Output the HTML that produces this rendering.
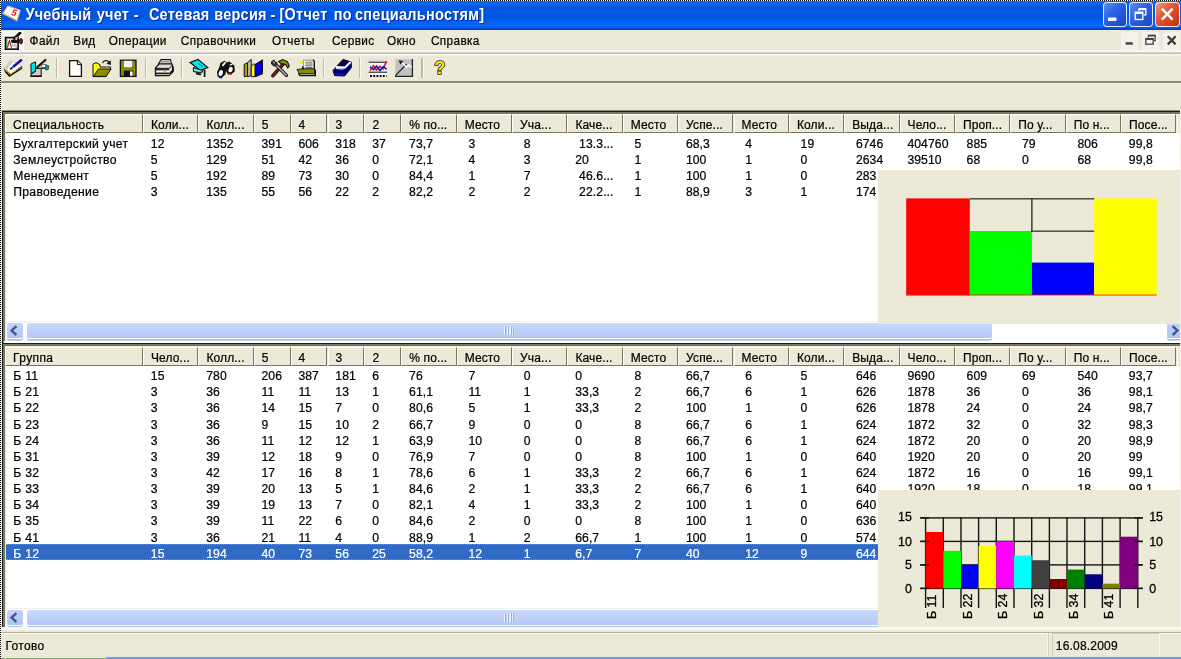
<!DOCTYPE html>
<html lang="ru">
<head>
<meta charset="utf-8">
<title>Учебный учет</title>
<style>
html,body{margin:0;padding:0;}
body{width:1181px;height:659px;overflow:hidden;background:#ECE9D8;font-family:"Liberation Sans",sans-serif;font-size:12px;color:#000;position:relative;}
#app{position:absolute;left:0;top:0;width:1181px;height:659px;overflow:hidden;will-change:transform;}
.abs{position:absolute;}
/* dotted frame */
#dotT{position:absolute;left:0;top:0;width:1181px;height:1px;background:repeating-linear-gradient(to right,#000 0,#000 1px,#fff 1px,#fff 2px);}
#dotL{position:absolute;left:0;top:0;width:1px;height:659px;background:repeating-linear-gradient(to bottom,#000 0,#000 1px,#fff 1px,#fff 2px);}
/* title bar */
#title{position:absolute;left:1px;top:1px;width:1180px;height:28.7px;background:linear-gradient(to bottom,#0E6EF6 0%,#0A68F2 6%,#0660EC 13%,#0257E4 21%,#0055E1 52%,#0059E8 62%,#0462F4 73%,#0566F8 89%,#0552E2 93%,#0540CC 97%,#0436BC 100%);}
#title .txt{position:absolute;left:0;top:0;height:29px;line-height:29px;color:#fff;font-weight:bold;font-size:14.5px;white-space:pre;text-shadow:1px 1px 0.5px #0A2F9C;letter-spacing:0.26px;}
#title .txt span{position:absolute;top:0;transform-origin:0 19.8px;transform:scaleY(1.08);}
.cb{position:absolute;top:1.4px;width:24.2px;height:24.2px;border-radius:4px;border:1.2px solid rgba(255,255,255,0.85);box-sizing:border-box;background:linear-gradient(135deg,#5C8EF4 0%,#2F64E4 40%,#2253D6 70%,#1A45C2 100%);}
.cb.x{background:linear-gradient(135deg,#F09A80 0%,#E2583A 40%,#D2441F 70%,#B83410 100%);}
.cb svg{position:absolute;left:-1.2px;top:-1.2px;}
/* menu */
#menu{position:absolute;left:1px;top:30px;width:1180px;height:23px;background:#ECE9D8;}
#menu span.mi{position:absolute;top:0;height:23px;line-height:22px;transform-origin:0 14.9px;transform:scaleY(1.1);font-size:11.8px;letter-spacing:0.35px;white-space:nowrap;}
.mb{position:absolute;top:2.3px;width:17px;height:17.4px;background:#F4F2EA;border-radius:1px;}
.mb svg{position:absolute;left:0;top:0;}
#tb{position:absolute;left:1px;top:50.2px;width:1180px;height:31px;background:linear-gradient(to bottom,#F6F5EE 0,#F6F5EE 2.4px,#BFBCAC 2.6px,#BFBCAC 3.8px,#F9F8F3 4px,#F9F8F3 5.4px,#ECE9D8 5.6px);}
.sep{position:absolute;top:59px;width:1px;height:19px;background:#ACA899;box-shadow:1px 0 0 #fff;}
.ico{position:absolute;top:58px;width:20px;height:20px;}
/* list */
.hdr{position:absolute;left:5px;width:1176px;background:#ECE9D8;}
.hc{position:absolute;box-sizing:border-box;white-space:nowrap;overflow:hidden;background:#ECE9D8;border-top:1px solid #fff;border-left:1.2px solid #fff;border-right:1.4px solid #77745F;border-bottom:1.4px solid #77745F;}
.hc span{position:absolute;left:7px;top:-0.4px;line-height:22px;letter-spacing:0.12px;transform-origin:0 14.6px;transform:scaleY(1.07);}
.list{position:absolute;left:5.5px;width:1176px;background:#fff;overflow:hidden;}
.row{position:absolute;left:0;width:1181px;white-space:nowrap;font-size:12.2px;transform-origin:0 12.1px;transform:scaleY(1.07);}
.row span{position:absolute;top:0;letter-spacing:0.08px;}
.row span:first-child{letter-spacing:0.3px;}
.row,.hc span,#menu .mi,#status span{-webkit-text-stroke:0.22px currentColor;}
.row.sel{color:#fff;}
.selbg{position:absolute;left:6px;width:1174px;background:#316AC5;box-sizing:border-box;border-top:1px dotted rgba(206,149,58,0.75);border-bottom:1px dotted rgba(206,149,58,0.75);}
.panel{position:absolute;background:#ECE9D8;}
/* scrollbars */
.sb{position:absolute;left:5.5px;width:1174px;height:20.4px;background:linear-gradient(to bottom,#F0EEE4 0px,#FBFAF5 2px,#FEFEFC 5px,#FFFFFF 100%);}
.sbtn{position:absolute;top:2.2px;width:15.8px;height:14.8px;box-sizing:border-box;border-radius:2.5px;background:linear-gradient(to bottom,#C3D3FB 0%,#B9CBF8 55%,#B0C4F4 100%);box-shadow:0 0 0 1px #fff,0 2.5px 0 0.3px #A8C2EE;}
.grip{position:absolute;width:10.6px;height:8.4px;background:repeating-linear-gradient(to right,#F0F5FF 0,#F0F5FF 1.2px,#8FA9EC 1.3px,#8FA9EC 2.3px,#C1D2FB 2.4px,#C1D2FB 2.65px);opacity:0.9}
.sbtn svg{position:absolute;left:0;top:0;}
.thumb{position:absolute;top:2.2px;height:14.8px;box-sizing:border-box;border-radius:2.5px;background:linear-gradient(to bottom,#C9D8FC 0%,#C1D2FB 40%,#B5C8F6 100%);box-shadow:0 0 0 1px #fff,0 2.5px 0 0.3px #A8C2EE;}
#status{position:absolute;left:1px;top:630px;width:1180px;height:28px;background:#ECE9D8;}
</style>
</head>
<body>
<div id="app">

<!-- title bar -->
<div id="title">
  <svg class="abs" style="left:1.2px;top:4.4px" width="20" height="18" viewBox="0 0 20 18">
    <path d="M6 0.9 L18.2 5.4 L15 15.4 L0.9 8.2 Z" fill="#fff" stroke="#DDBB92" stroke-width="1.1"/>
    <path d="M1.2 9 L14.8 16 L16 12.6" fill="none" stroke="#CFA46E" stroke-width="1.2" stroke-dasharray="1.5 1"/>
    <text x="9.6" y="10.2" font-family="'Liberation Sans',sans-serif" font-size="9" font-weight="bold" font-style="italic" fill="#E81010" transform="rotate(14 10 8)">5</text>
  </svg>
  <div class="txt"><span style="left:24.4px">Учебный</span> <span style="left:95.7px">учет</span> <span style="left:132.7px">-</span> <span style="left:147.9px">Сетевая</span> <span style="left:213.2px">версия</span> <span style="left:269.4px">-</span> <span style="left:278.4px">[Отчет</span> <span style="left:332.8px">по</span> <span style="left:354.0px">специальностям]</span> </div>
  <div class="cb" style="left:1101.5px"><svg width="23.4" height="23.6" viewBox="-0.4 -0.3 23.4 23.6"><rect x="5.6" y="15.2" width="8.4" height="3.4" fill="#fff"/></svg></div>
  <div class="cb" style="left:1128.1px"><svg width="23.4" height="23.6" viewBox="-0.4 -0.3 23.4 23.6"><path d="M9.6 8.6 L9.6 6.4 L16.4 6.4 L16.4 12.6 L14.4 12.6" fill="none" stroke="#fff" stroke-width="1.3"/><path d="M9.4 6.9 L16.6 6.9" stroke="#fff" stroke-width="1.9"/><rect x="5.8" y="10" width="7.6" height="7.2" fill="none" stroke="#fff" stroke-width="1.4"/><path d="M5.6 10.6 L13.6 10.6" stroke="#fff" stroke-width="2.2"/></svg></div>
  <div class="cb x" style="left:1154.4px"><svg width="23.4" height="23.6" viewBox="-0.4 -0.3 23.4 23.6"><path d="M6.4 6.4 L17.2 17.4 M17.2 6.4 L6.4 17.4" stroke="#fff" stroke-width="2.5" stroke-linecap="butt"/></svg></div>
</div>

<!-- menu bar -->
<div id="menu">
  <div class="abs" style="left:2.4px;top:1.4px;width:20.4px;height:19.6px;background:#FBFAF6"></div>
  <svg class="abs" style="left:3px;top:1.6px" width="20" height="19" viewBox="0 0 20 19">
    <rect x="1.5" y="5.6" width="12.6" height="11.6" fill="#fff" stroke="#111" stroke-width="1.7"/>
    <path d="M3.4 15.6 L5.4 8.6 L7.6 15.6" fill="none" stroke="#B01010" stroke-width="1.1"/>
    <path d="M2.8 7 L2.8 16" stroke="#109030" stroke-width="1.1"/>
    <path d="M7.4 12.4 L13 15.4 M9.6 11.6 L13.2 13.4" stroke="#bbb" stroke-width="1.2"/>
    <path d="M10.4 6.6 L16 1" stroke="#111" stroke-width="2.8" stroke-linecap="round"/>
    <path d="M6.8 7.8 L15.6 7.8 L15.6 11 L7.6 11 Z" fill="#111"/>
    <ellipse cx="17" cy="9.2" rx="1.5" ry="2.8" fill="#9C1010" stroke="#111" stroke-width="0.9"/>
    <path d="M11.4 6.4 L13.6 5.4" stroke="#fff" stroke-width="1.2"/>
  </svg>
  <span class="mi" style="left:28.6px">Файл</span>
  <span class="mi" style="left:72.2px">Вид</span>
  <span class="mi" style="left:107.8px">Операции</span>
  <span class="mi" style="left:179.8px">Справочники</span>
  <span class="mi" style="left:271px">Отчеты</span>
  <span class="mi" style="left:331px">Сервис</span>
  <span class="mi" style="left:386px">Окно</span>
  <span class="mi" style="left:430px">Справка</span>
  <div class="mb" style="left:1120px"><svg width="17" height="17.4" viewBox="0 0 17 17.4"><rect x="4.6" y="10.2" width="7.2" height="2.5" fill="#444"/></svg></div>
  <div class="mb" style="left:1140.8px"><svg width="17" height="17.4" viewBox="0 0 17 17.4"><path d="M6.4 5.4 L6.4 3.4 L13.2 3.4 L13.2 8.6 L11.8 8.6" fill="none" stroke="#444" stroke-width="1.2"/><path d="M6.2 3.7 L13.4 3.7" stroke="#444" stroke-width="1.7"/><rect x="3.8" y="6.6" width="7.4" height="5.6" fill="none" stroke="#444" stroke-width="1.3"/><path d="M3.6 7 L11.4 7" stroke="#444" stroke-width="2"/></svg></div>
  <div class="mb" style="left:1161.6px"><svg width="17" height="17.4" viewBox="0 0 17 17.4"><path d="M4.8 4.2 L12.6 12.4 M12.6 4.2 L4.8 12.4" stroke="#3c3c3c" stroke-width="2.3"/></svg></div>
</div>

<!-- toolbar -->
<div id="tb"></div>
<svg class="abs" style="left:2.6px;top:57.6px" width="20" height="20" viewBox="0 0 20 20">
<path d="M0.6 10.8 L7.6 2.4 L19.2 7.8 L19.2 9.8 L6.2 18.2 L1.4 12.8 Z" fill="#3a3a3a"/>
<path d="M0.8 10.4 L7.6 2.4 L19 7.6 L8 16.2 Z" fill="#fff"/>
<path d="M0.8 10.4 L7.6 2.4 L10 3.6 L3.6 12.2 Z" fill="#CFCBC2"/>
<path d="M3 12.4 L8 16.6 L18.8 8.6" fill="none" stroke="#C8A018" stroke-width="2.2" stroke-dasharray="1.5 1.3"/>
<path d="M2 13.4 L6.4 18.2 L19 10.2" fill="none" stroke="#111" stroke-width="1.2"/>
<path d="M10.2 8.8 L18.8 1.6" stroke="#0808C8" stroke-width="2.5"/>
<path d="M7 11.4 L10.4 8.6" stroke="#111" stroke-width="1.8"/>
<path d="M9.4 9.6 L10.6 8.6" stroke="#10A0A0" stroke-width="1.8"/>
</svg>
<svg class="abs" style="left:29.6px;top:57.8px" width="20" height="20" viewBox="0 0 20 20">
<path d="M0.9 6 L5.5 3.8 L5.5 13.2 L1.2 16.2 Z" fill="#00E6E6" stroke="#111" stroke-width="1"/>
<path d="M5.5 10.4 L11.2 10.4 L11.2 18.4 L0.9 18.4 L0.9 16.4 L5.5 13.2 Z" fill="#CDCDCD" stroke="#1a1a1a" stroke-width="1.1"/>
<path d="M0.8 18.2 L11.4 18.2" stroke="#111" stroke-width="1.6"/>
<path d="M11 7 L16.2 6.4 L16.2 9.4 L12 10 Z" fill="#fff" stroke="#333" stroke-width="0.7"/>
<path d="M12 10.4 L16.4 10" stroke="#111" stroke-width="1.2"/>
<path d="M15.8 7.2 L18.8 7.8 L18.2 11.6 L15.8 12 Z" fill="#00A8A8" stroke="#033" stroke-width="0.7"/>
<path d="M7.4 9 L15.4 2" stroke="#111" stroke-width="2.3" stroke-linecap="round"/>
</svg>
<svg class="abs" style="left:68.2px;top:58.4px" width="20" height="20" viewBox="0 0 20 20">
<path d="M1.6 2.6 L9.6 2.6 L13.4 6.4 L13.4 18.4 L1.6 18.4 Z" fill="#fff" stroke="#111" stroke-width="1.3"/>
<path d="M9.4 2.8 L9.4 6.6 L13.2 6.6" fill="#ddd" stroke="#111" stroke-width="1"/>
</svg>
<svg class="abs" style="left:91.6px;top:57.8px" width="20" height="20" viewBox="0 0 20 20">
<path d="M1 6.2 L4 4.6 L8 6.6 L8 9 L18.6 9 L18.6 10 L14 18.6 L1 18.6 Z" fill="#FFFF00" stroke="#111" stroke-width="1"/>
<path d="M1.4 18.4 L6.4 11 L19.2 11 L14 18.4 Z" fill="#8C8C00" stroke="#111" stroke-width="1"/>
<path d="M10.5 5 C12 2 15.5 2 17 4.2" fill="none" stroke="#111" stroke-width="1.2"/>
<path d="M18.8 2.2 L18.8 7 L14.4 5.8 Z" fill="#111"/>
</svg>
<svg class="abs" style="left:119.2px;top:58.4px" width="20" height="20" viewBox="0 0 20 20">
<rect x="1.4" y="2.2" width="15.6" height="16.2" fill="#8C8C00" stroke="#111" stroke-width="1.3"/>
<rect x="4.4" y="2.6" width="9.4" height="7.2" fill="#F4F4F4" stroke="#333" stroke-width="0.5"/>
<rect x="4.8" y="12.6" width="9.4" height="5.6" fill="#111"/>
<rect x="11" y="13.4" width="2.6" height="4.4" fill="#fff"/>
</svg>
<svg class="abs" style="left:154px;top:57.6px" width="20" height="20" viewBox="0 0 20 20">
<path d="M4.4 6 L7 1.6 L16.4 1.6 L17.6 6 Z" fill="#fff" stroke="#111" stroke-width="1.1"/>
<path d="M7.4 3.4 L15 3.4 L15.6 5.6 L6.4 5.6 Z" fill="#BDBDBD" stroke="#444" stroke-width="0.5"/>
<path d="M1.4 10 L5 6 L17.8 6 L19.2 9.6 L19.2 13.4 L15 17.6 L1.4 17.6 Z" fill="#DADADA" stroke="#111" stroke-width="1.2"/>
<path d="M1.4 10.4 L15.2 10.4 L19 6.6" fill="none" stroke="#111" stroke-width="1"/>
<path d="M2 11.8 L15 11.8" stroke="#111" stroke-width="1.3"/>
<path d="M2 13.4 L15 13.4" stroke="#fff" stroke-width="1.3"/>
<path d="M2 15.4 L15 15.4" stroke="#111" stroke-width="1.5"/>
<path d="M15.6 15.8 L18.8 12.4 L18.8 8.6" fill="none" stroke="#111" stroke-width="1.6"/>
<rect x="9" y="12.4" width="3.4" height="1.7" fill="#D8D000"/>
</svg>
<svg class="abs" style="left:189.4px;top:57.6px" width="20" height="20" viewBox="0 0 20 20">
<path d="M1 4.6 L9 1.4 L18.8 9.6 L11.4 12.4 Z" fill="#00E8E8" stroke="#111" stroke-width="1.2"/>
<path d="M4.4 9.4 L4.4 13.6 L12.6 15 L14.2 11.6 L11.4 12.4 Z" fill="#00D0D0" stroke="#111" stroke-width="1"/>
<path d="M5 11.6 L11.6 13" stroke="#fff" stroke-width="0.9"/>
<path d="M9 5.4 L13.4 8.4" stroke="#066" stroke-width="1"/>
<path d="M7 15.4 L12 16.6" stroke="#111" stroke-width="1.6"/>
<path d="M15.6 11.6 L15.6 19" stroke="#111" stroke-width="1.7"/>
</svg>
<svg class="abs" style="left:216px;top:58.6px" width="20" height="20" viewBox="0 0 20 20">
<path d="M4.4 4 L8.4 1.8 L11 3.6 L13.4 2.6 L18.4 6.4 L18.8 12.4 L15.6 15 L11.4 14.6 L10 12 L9.4 15.4 L6 18.4 L1.6 17.6 L1 13.2 L3.2 8.2 Z" fill="#111"/>
<ellipse cx="4.8" cy="14" rx="2" ry="3" fill="#fff" transform="rotate(20 4.8 14)"/>
<ellipse cx="14.6" cy="10.6" rx="2" ry="2.8" fill="#fff" transform="rotate(20 14.6 10.6)"/>
<path d="M6.8 6.4 L9 3.8" stroke="#fff" stroke-width="1.8" stroke-linecap="round"/>
<path d="M14 6 L16 5.4" stroke="#fff" stroke-width="1.2" stroke-linecap="round"/>
<path d="M2.6 18 L6.2 18.6" stroke="#1010C0" stroke-width="1.6"/>
<path d="M11.6 14.8 L15.4 15.2" stroke="#C01010" stroke-width="1.5"/>
</svg>
<svg class="abs" style="left:242.6px;top:57.6px" width="20" height="20" viewBox="0 0 20 20">
<path d="M1.2 6.4 L4.6 4.6 L4.6 18 L1.2 18.8 Z" fill="#A8A000" stroke="#111" stroke-width="1"/>
<path d="M4.6 4.6 L8.2 1.4 L8.2 17.4 L4.6 18.8 Z" fill="#BEBEBE" stroke="#111" stroke-width="1"/>
<path d="M8.2 8.4 L10.6 6 L12.2 6.4 L12.2 18.4 L8.2 18.8 Z" fill="#FFFF00" stroke="#111" stroke-width="1"/>
<path d="M12.2 6.4 L19 2.2 L19 16 L12.2 18.8 Z" fill="#0000E0" stroke="#111" stroke-width="1"/>
<path d="M17.6 3.4 L19.6 1.6 L19.6 15.6 L19 16" fill="#111" stroke="#111" stroke-width="0.8"/>
</svg>
<svg class="abs" style="left:269.6px;top:58.4px" width="20" height="20" viewBox="0 0 20 20">
<path d="M3 17.6 L13.6 5.6" stroke="#111" stroke-width="3.6" stroke-linecap="round"/>
<path d="M3 17.6 L13.4 5.8" stroke="#A01838" stroke-width="1.5" stroke-linecap="round"/>
<path d="M4.6 5.4 L16.4 17.4" stroke="#111" stroke-width="3.4" stroke-linecap="round"/>
<path d="M5 5.8 L16.2 17.2" stroke="#B8B8B8" stroke-width="1.4" stroke-linecap="round"/>
<path d="M8.6 3.6 L12.8 1.6 L17.4 3.6 L19.2 7.6 L17.8 10 L15.6 6.4 L11 5.6 Z" fill="#8C8C00" stroke="#111" stroke-width="1.1"/>
<path d="M1.6 3.4 L4.2 2 L4.8 4.4 L6.8 4.2 L7 6.8 L4 8.2 L1.4 6 Z" fill="#333" stroke="#111" stroke-width="0.8"/>
<path d="M3.6 3.6 L4.6 5.4" stroke="#fff" stroke-width="1"/>
</svg>
<svg class="abs" style="left:296px;top:58px" width="20" height="20" viewBox="0 0 20 20">
<path d="M7.4 2.2 L17 2.2 L17 11 L7.4 11 Z" fill="#fff" stroke="#555" stroke-width="0.6"/>
<path d="M9.4 4.2 L16 4.2 M9.4 6 L16 6 M9.4 7.8 L16 7.8 M9.4 9.6 L16 9.6" stroke="#555" stroke-width="0.9"/>
<path d="M17.4 1.6 L18.4 4 L18.4 11" fill="none" stroke="#111" stroke-width="1.2"/>
<path d="M1 11.6 L6 10.8 L18.6 10.8 L18.6 15.6 L3.4 15.6 Z" fill="#8C8C00" stroke="#111" stroke-width="0.9"/>
<path d="M2.4 15.4 L4 17.4 L19.4 17.4 L19.4 11.4" fill="none" stroke="#111" stroke-width="1.5"/>
<rect x="6" y="8.4" width="1.8" height="3" fill="#222"/>
<rect x="3.6" y="3.4" width="3.6" height="2.2" fill="#F4E800"/>
</svg>
<svg class="abs" style="left:331.6px;top:57.6px" width="20" height="20" viewBox="0 0 20 20">
<path d="M1 12.6 L4.6 8.4 L11 1.4 L19.2 4 L19.4 9.6 L12.6 18 L2.6 17.6 Z" fill="#00007C" stroke="#05052A" stroke-width="1"/>
<path d="M4.6 8.4 L11 1.4 L13.4 2.2 L8 8.6 Z" fill="#111"/>
<path d="M4 9 L12.8 9.6 L18.6 4" fill="none" stroke="#fff" stroke-width="2"/>
<path d="M3.6 10.4 L11.4 11" stroke="#C8C8D8" stroke-width="1.4"/>
<path d="M2.4 15.8 L12 16.4" stroke="#1818B0" stroke-width="1.4"/>
</svg>
<svg class="abs" style="left:367.6px;top:57.8px" width="20" height="20" viewBox="0 0 20 20">
<rect x="0.6" y="0.8" width="18.6" height="18" fill="#F4F4F0"/>
<path d="M0.6 2 L19.2 2" stroke="#D0D0D0" stroke-width="1.2"/>
<path d="M0.6 4.2 L19.2 4.2" stroke="#222" stroke-width="1.1"/>
<path d="M0.6 14.2 L19.2 14.2" stroke="#222" stroke-width="1.1"/>
<path d="M2 18 L18.6 18" stroke="#111" stroke-width="1.8" stroke-dasharray="2 1.2"/>
<path d="M2 12.6 L5.4 7.6 L8.4 12 L12 8.4 L15 11 L18.6 3.4" fill="none" stroke="#E01010" stroke-width="1.6"/>
<path d="M2 8.8 L5.6 11.6 L8.6 8 L12 12.6 L15.4 8.6 L18.6 11.4" fill="none" stroke="#1020C0" stroke-width="1.6"/>
</svg>
<svg class="abs" style="left:394.4px;top:58.4px" width="20" height="20" viewBox="0 0 20 20">
<rect x="1.4" y="1.2" width="16.6" height="16.8" fill="#C2C2C2"/>
<path d="M1 18.4 L18.4 18.4 L18.4 1" fill="none" stroke="#222" stroke-width="1.3"/>
<path d="M1.4 17.6 L12.4 6.2" stroke="#222" stroke-width="1.3"/>
<path d="M6.6 3 L12.6 9.4 L15 7 L17.6 9.4" fill="none" stroke="#fff" stroke-width="1.5"/>
<path d="M4.6 2.2 L9.6 3 L6.4 6.4 Z" fill="#222"/>
</svg>
<svg class="abs" style="left:431px;top:57.4px" width="20" height="20" viewBox="0 0 20 20">
<text x="8.8" y="17.2" text-anchor="middle" font-family="'Liberation Sans',sans-serif" font-weight="bold" font-size="18.5" fill="#F8F000" stroke="#111" stroke-width="1.5" paint-order="stroke">?</text>
</svg>
<div class="abs" style="left:56.0px;top:58px;width:1.3px;height:20px;background:#BDB9A8"></div><div class="abs" style="left:57.3px;top:58px;width:1px;height:20px;background:#FAF9F4"></div>
<div class="abs" style="left:145.0px;top:58px;width:1.3px;height:20px;background:#BDB9A8"></div><div class="abs" style="left:146.3px;top:58px;width:1px;height:20px;background:#FAF9F4"></div>
<div class="abs" style="left:180.9px;top:58px;width:1.3px;height:20px;background:#BDB9A8"></div><div class="abs" style="left:182.20000000000002px;top:58px;width:1px;height:20px;background:#FAF9F4"></div>
<div class="abs" style="left:322.9px;top:58px;width:1.3px;height:20px;background:#BDB9A8"></div><div class="abs" style="left:324.2px;top:58px;width:1px;height:20px;background:#FAF9F4"></div>
<div class="abs" style="left:359.0px;top:58px;width:1.3px;height:20px;background:#BDB9A8"></div><div class="abs" style="left:360.3px;top:58px;width:1px;height:20px;background:#FAF9F4"></div>
<div class="abs" style="left:421.3px;top:58px;width:1.3px;height:20px;background:#BDB9A8"></div><div class="abs" style="left:422.6px;top:58px;width:1px;height:20px;background:#FAF9F4"></div>
<div class="abs" style="left:1px;top:81.2px;width:1180px;height:1.6px;background:#8C8978"></div>
<div class="abs" style="left:1px;top:82.8px;width:1180px;height:1px;background:#F2F0E6"></div>

<!-- top list -->
<div class="abs" style="left:2px;top:110px;width:1179px;height:1px;background:#8F8C7C"></div>
<div class="abs" style="left:2px;top:111px;width:1179px;height:1.1px;background:#1c1c1c"></div>
<div class="abs" style="left:3.3px;top:112.1px;width:1178px;height:1.7px;background:#77745F"></div>
<div class="abs" style="left:2.1px;top:111px;width:1.2px;height:519px;background:#1c1c1c"></div>
<div class="abs" style="left:3.3px;top:112px;width:2.2px;height:518px;background:#77745F"></div>
<div class="list" style="top:113.7px;height:209px"></div>
<div class="hdr" style="top:113.7px;height:19.7px"></div>
<div class="hc" style="left:4.6px;top:113.7px;width:138.4px;height:19.7px"><span style="letter-spacing:0.37px;left:7.5px">Специальность</span></div>
<div class="hc" style="left:143.0px;top:113.7px;width:55.4px;height:19.7px"><span>Коли...</span></div>
<div class="hc" style="left:198.4px;top:113.7px;width:55.4px;height:19.7px"><span>Колл...</span></div>
<div class="hc" style="left:253.7px;top:113.7px;width:36.9px;height:19.7px"><span>5</span></div>
<div class="hc" style="left:290.6px;top:113.7px;width:36.9px;height:19.7px"><span>4</span></div>
<div class="hc" style="left:327.5px;top:113.7px;width:36.9px;height:19.7px"><span>3</span></div>
<div class="hc" style="left:364.4px;top:113.7px;width:36.9px;height:19.7px"><span>2</span></div>
<div class="hc" style="left:401.3px;top:113.7px;width:55.4px;height:19.7px"><span>% по...</span></div>
<div class="hc" style="left:456.7px;top:113.7px;width:55.4px;height:19.7px"><span>Место</span></div>
<div class="hc" style="left:512.1px;top:113.7px;width:55.4px;height:19.7px"><span>Уча...</span></div>
<div class="hc" style="left:567.4px;top:113.7px;width:55.4px;height:19.7px"><span>Каче...</span></div>
<div class="hc" style="left:622.8px;top:113.7px;width:55.4px;height:19.7px"><span>Место</span></div>
<div class="hc" style="left:678.1px;top:113.7px;width:55.4px;height:19.7px"><span>Успе...</span></div>
<div class="hc" style="left:733.5px;top:113.7px;width:55.4px;height:19.7px"><span>Место</span></div>
<div class="hc" style="left:788.9px;top:113.7px;width:55.4px;height:19.7px"><span>Коли...</span></div>
<div class="hc" style="left:844.2px;top:113.7px;width:55.4px;height:19.7px"><span>Выда...</span></div>
<div class="hc" style="left:899.6px;top:113.7px;width:55.4px;height:19.7px"><span>Чело...</span></div>
<div class="hc" style="left:954.9px;top:113.7px;width:55.4px;height:19.7px"><span>Проп...</span></div>
<div class="hc" style="left:1010.3px;top:113.7px;width:55.4px;height:19.7px"><span>По у...</span></div>
<div class="hc" style="left:1065.7px;top:113.7px;width:55.4px;height:19.7px"><span>По н...</span></div>
<div class="hc" style="left:1121.0px;top:113.7px;width:55.4px;height:19.7px"><span>Посе...</span></div>
<div class="abs" style="left:1177.0px;top:114.7px;width:1.2px;height:17.3px;background:#fff"></div>
<div class="row" style="top:135.90px;height:16.15px;line-height:16.15px">
<span style="left:13.2px">Бухгалтерский учет</span>
<span style="left:150.8px">12</span>
<span style="left:206.2px">1352</span>
<span style="left:261.5px">391</span>
<span style="left:298.4px">606</span>
<span style="left:335.3px">318</span>
<span style="left:372.2px">37</span>
<span style="left:409.1px">73,7</span>
<span style="left:468.4px">3</span>
<span style="left:523.8px">8</span>
<span style="left:579.1px">13.3...</span>
<span style="left:634.5px">5</span>
<span style="left:685.9px">68,3</span>
<span style="left:745.2px">4</span>
<span style="left:800.6px">19</span>
<span style="left:855.9px">6746</span>
<span style="left:907.4px">404760</span>
<span style="left:966.6px">885</span>
<span style="left:1022.0px">79</span>
<span style="left:1077.4px">806</span>
<span style="left:1128.8px">99,8</span>
</div>
<div class="row" style="top:152.05px;height:16.15px;line-height:16.15px">
<span style="left:13.2px">Землеустройство</span>
<span style="left:150.8px">5</span>
<span style="left:206.2px">129</span>
<span style="left:261.5px">51</span>
<span style="left:298.4px">42</span>
<span style="left:335.3px">36</span>
<span style="left:372.2px">0</span>
<span style="left:409.1px">72,1</span>
<span style="left:468.4px">4</span>
<span style="left:523.8px">3</span>
<span style="left:575.2px">20</span>
<span style="left:634.5px">1</span>
<span style="left:685.9px">100</span>
<span style="left:745.2px">1</span>
<span style="left:800.6px">0</span>
<span style="left:855.9px">2634</span>
<span style="left:907.4px">39510</span>
<span style="left:966.6px">68</span>
<span style="left:1022.0px">0</span>
<span style="left:1077.4px">68</span>
<span style="left:1128.8px">99,8</span>
</div>
<div class="row" style="top:168.20px;height:16.15px;line-height:16.15px">
<span style="left:13.2px">Менеджмент</span>
<span style="left:150.8px">5</span>
<span style="left:206.2px">192</span>
<span style="left:261.5px">89</span>
<span style="left:298.4px">73</span>
<span style="left:335.3px">30</span>
<span style="left:372.2px">0</span>
<span style="left:409.1px">84,4</span>
<span style="left:468.4px">1</span>
<span style="left:523.8px">7</span>
<span style="left:579.1px">46.6...</span>
<span style="left:634.5px">1</span>
<span style="left:685.9px">100</span>
<span style="left:745.2px">1</span>
<span style="left:800.6px">0</span>
<span style="left:855.9px">283</span>
</div>
<div class="row" style="top:184.35px;height:16.15px;line-height:16.15px">
<span style="left:13.2px">Правоведение</span>
<span style="left:150.8px">3</span>
<span style="left:206.2px">135</span>
<span style="left:261.5px">55</span>
<span style="left:298.4px">56</span>
<span style="left:335.3px">22</span>
<span style="left:372.2px">2</span>
<span style="left:409.1px">82,2</span>
<span style="left:468.4px">2</span>
<span style="left:523.8px">2</span>
<span style="left:579.1px">22.2...</span>
<span style="left:634.5px">1</span>
<span style="left:685.9px">88,9</span>
<span style="left:745.2px">3</span>
<span style="left:800.6px">1</span>
<span style="left:855.9px">174</span>
</div>
<div class="sb" style="top:320.9px">
  <div class="sbtn" style="left:1.6px"><svg width="15.8" height="14.8" viewBox="0 0 15.8 14.8"><path d="M9.4 3.2 L4.6 7.6 L9.4 12" fill="none" stroke="#435788" stroke-width="2.4" stroke-linejoin="miter"/></svg></div>
  <div class="thumb" style="left:21.7px;width:964.6px"></div>
  <div class="grip" style="left:498.6px;top:6.2px"></div>
  <div class="sbtn" style="left:1161.3px"><svg width="15.8" height="14.8" viewBox="0 0 15.8 14.8"><path d="M5.6 3.2 L10.4 7.6 L5.6 12" fill="none" stroke="#435788" stroke-width="2.4" stroke-linejoin="miter"/></svg></div>
</div>
<div class="panel" style="left:877.8px;top:170px;width:303.2px;height:153.5px">
<svg width="303.2" height="151" viewBox="877.8 170 303.2 151" style="position:absolute;left:0;top:0">
<rect x="906" y="198.4" width="63.6" height="96.8" fill="#FF0000"/>
<rect x="969.6" y="231" width="62.1" height="64" fill="#00FF00"/>
<rect x="1031.7" y="262.6" width="62.3" height="32.4" fill="#0000FF"/>
<rect x="1094" y="198.4" width="62.6" height="96.8" fill="#FFFF00"/>
<rect x="906" y="294.6" width="250.6" height="0.9" fill="#FF2000"/>
<rect x="969.6" y="198.3" width="124.4" height="1.1" fill="#111"/>
<rect x="1031.1" y="198.3" width="1.2" height="33.3" fill="#111"/>
<rect x="1031.1" y="230.6" width="62.9" height="1.1" fill="#111"/>
</svg>
</div>

<!-- bottom list -->
<div class="abs" style="left:3.6px;top:341.1px;width:1178px;height:1.5px;background:#fff"></div>
<div class="abs" style="left:2px;top:342.6px;width:1179px;height:1.5px;background:#1c1c1c"></div>
<div class="abs" style="left:3.3px;top:344.1px;width:1178px;height:2.4px;background:#77745F"></div>
<div class="list" style="top:346.5px;height:263px"></div>
<div class="hdr" style="top:346.5px;height:19.7px"></div>
<div class="hc" style="left:4.6px;top:346.5px;width:138.4px;height:19.7px"><span style="letter-spacing:0.37px;left:7.5px">Группа</span></div>
<div class="hc" style="left:143.0px;top:346.5px;width:55.4px;height:19.7px"><span>Чело...</span></div>
<div class="hc" style="left:198.4px;top:346.5px;width:55.4px;height:19.7px"><span>Колл...</span></div>
<div class="hc" style="left:253.7px;top:346.5px;width:36.9px;height:19.7px"><span>5</span></div>
<div class="hc" style="left:290.6px;top:346.5px;width:36.9px;height:19.7px"><span>4</span></div>
<div class="hc" style="left:327.5px;top:346.5px;width:36.9px;height:19.7px"><span>3</span></div>
<div class="hc" style="left:364.4px;top:346.5px;width:36.9px;height:19.7px"><span>2</span></div>
<div class="hc" style="left:401.3px;top:346.5px;width:55.4px;height:19.7px"><span>% по...</span></div>
<div class="hc" style="left:456.7px;top:346.5px;width:55.4px;height:19.7px"><span>Место</span></div>
<div class="hc" style="left:512.1px;top:346.5px;width:55.4px;height:19.7px"><span>Уча...</span></div>
<div class="hc" style="left:567.4px;top:346.5px;width:55.4px;height:19.7px"><span>Каче...</span></div>
<div class="hc" style="left:622.8px;top:346.5px;width:55.4px;height:19.7px"><span>Место</span></div>
<div class="hc" style="left:678.1px;top:346.5px;width:55.4px;height:19.7px"><span>Успе...</span></div>
<div class="hc" style="left:733.5px;top:346.5px;width:55.4px;height:19.7px"><span>Место</span></div>
<div class="hc" style="left:788.9px;top:346.5px;width:55.4px;height:19.7px"><span>Коли...</span></div>
<div class="hc" style="left:844.2px;top:346.5px;width:55.4px;height:19.7px"><span>Выда...</span></div>
<div class="hc" style="left:899.6px;top:346.5px;width:55.4px;height:19.7px"><span>Чело...</span></div>
<div class="hc" style="left:954.9px;top:346.5px;width:55.4px;height:19.7px"><span>Проп...</span></div>
<div class="hc" style="left:1010.3px;top:346.5px;width:55.4px;height:19.7px"><span>По у...</span></div>
<div class="hc" style="left:1065.7px;top:346.5px;width:55.4px;height:19.7px"><span>По н...</span></div>
<div class="hc" style="left:1121.0px;top:346.5px;width:55.4px;height:19.7px"><span>Посе...</span></div>
<div class="abs" style="left:1177.0px;top:347.5px;width:1.2px;height:17.3px;background:#fff"></div>
<div class="row" style="top:368.10px;height:16.15px;line-height:16.15px">
<span style="left:13.2px">Б 11</span>
<span style="left:150.8px">15</span>
<span style="left:206.2px">780</span>
<span style="left:261.5px">206</span>
<span style="left:298.4px">387</span>
<span style="left:335.3px">181</span>
<span style="left:372.2px">6</span>
<span style="left:409.1px">76</span>
<span style="left:468.4px">7</span>
<span style="left:523.8px">0</span>
<span style="left:575.2px">0</span>
<span style="left:634.5px">8</span>
<span style="left:685.9px">66,7</span>
<span style="left:745.2px">6</span>
<span style="left:800.6px">5</span>
<span style="left:855.9px">646</span>
<span style="left:907.4px">9690</span>
<span style="left:966.6px">609</span>
<span style="left:1022.0px">69</span>
<span style="left:1077.4px">540</span>
<span style="left:1128.8px">93,7</span>
</div>
<div class="row" style="top:384.25px;height:16.15px;line-height:16.15px">
<span style="left:13.2px">Б 21</span>
<span style="left:150.8px">3</span>
<span style="left:206.2px">36</span>
<span style="left:261.5px">11</span>
<span style="left:298.4px">11</span>
<span style="left:335.3px">13</span>
<span style="left:372.2px">1</span>
<span style="left:409.1px">61,1</span>
<span style="left:468.4px">11</span>
<span style="left:523.8px">1</span>
<span style="left:575.2px">33,3</span>
<span style="left:634.5px">2</span>
<span style="left:685.9px">66,7</span>
<span style="left:745.2px">6</span>
<span style="left:800.6px">1</span>
<span style="left:855.9px">626</span>
<span style="left:907.4px">1878</span>
<span style="left:966.6px">36</span>
<span style="left:1022.0px">0</span>
<span style="left:1077.4px">36</span>
<span style="left:1128.8px">98,1</span>
</div>
<div class="row" style="top:400.40px;height:16.15px;line-height:16.15px">
<span style="left:13.2px">Б 22</span>
<span style="left:150.8px">3</span>
<span style="left:206.2px">36</span>
<span style="left:261.5px">14</span>
<span style="left:298.4px">15</span>
<span style="left:335.3px">7</span>
<span style="left:372.2px">0</span>
<span style="left:409.1px">80,6</span>
<span style="left:468.4px">5</span>
<span style="left:523.8px">1</span>
<span style="left:575.2px">33,3</span>
<span style="left:634.5px">2</span>
<span style="left:685.9px">100</span>
<span style="left:745.2px">1</span>
<span style="left:800.6px">0</span>
<span style="left:855.9px">626</span>
<span style="left:907.4px">1878</span>
<span style="left:966.6px">24</span>
<span style="left:1022.0px">0</span>
<span style="left:1077.4px">24</span>
<span style="left:1128.8px">98,7</span>
</div>
<div class="row" style="top:416.55px;height:16.15px;line-height:16.15px">
<span style="left:13.2px">Б 23</span>
<span style="left:150.8px">3</span>
<span style="left:206.2px">36</span>
<span style="left:261.5px">9</span>
<span style="left:298.4px">15</span>
<span style="left:335.3px">10</span>
<span style="left:372.2px">2</span>
<span style="left:409.1px">66,7</span>
<span style="left:468.4px">9</span>
<span style="left:523.8px">0</span>
<span style="left:575.2px">0</span>
<span style="left:634.5px">8</span>
<span style="left:685.9px">66,7</span>
<span style="left:745.2px">6</span>
<span style="left:800.6px">1</span>
<span style="left:855.9px">624</span>
<span style="left:907.4px">1872</span>
<span style="left:966.6px">32</span>
<span style="left:1022.0px">0</span>
<span style="left:1077.4px">32</span>
<span style="left:1128.8px">98,3</span>
</div>
<div class="row" style="top:432.70px;height:16.15px;line-height:16.15px">
<span style="left:13.2px">Б 24</span>
<span style="left:150.8px">3</span>
<span style="left:206.2px">36</span>
<span style="left:261.5px">11</span>
<span style="left:298.4px">12</span>
<span style="left:335.3px">12</span>
<span style="left:372.2px">1</span>
<span style="left:409.1px">63,9</span>
<span style="left:468.4px">10</span>
<span style="left:523.8px">0</span>
<span style="left:575.2px">0</span>
<span style="left:634.5px">8</span>
<span style="left:685.9px">66,7</span>
<span style="left:745.2px">6</span>
<span style="left:800.6px">1</span>
<span style="left:855.9px">624</span>
<span style="left:907.4px">1872</span>
<span style="left:966.6px">20</span>
<span style="left:1022.0px">0</span>
<span style="left:1077.4px">20</span>
<span style="left:1128.8px">98,9</span>
</div>
<div class="row" style="top:448.85px;height:16.15px;line-height:16.15px">
<span style="left:13.2px">Б 31</span>
<span style="left:150.8px">3</span>
<span style="left:206.2px">39</span>
<span style="left:261.5px">12</span>
<span style="left:298.4px">18</span>
<span style="left:335.3px">9</span>
<span style="left:372.2px">0</span>
<span style="left:409.1px">76,9</span>
<span style="left:468.4px">7</span>
<span style="left:523.8px">0</span>
<span style="left:575.2px">0</span>
<span style="left:634.5px">8</span>
<span style="left:685.9px">100</span>
<span style="left:745.2px">1</span>
<span style="left:800.6px">0</span>
<span style="left:855.9px">640</span>
<span style="left:907.4px">1920</span>
<span style="left:966.6px">20</span>
<span style="left:1022.0px">0</span>
<span style="left:1077.4px">20</span>
<span style="left:1128.8px">99</span>
</div>
<div class="row" style="top:465.00px;height:16.15px;line-height:16.15px">
<span style="left:13.2px">Б 32</span>
<span style="left:150.8px">3</span>
<span style="left:206.2px">42</span>
<span style="left:261.5px">17</span>
<span style="left:298.4px">16</span>
<span style="left:335.3px">8</span>
<span style="left:372.2px">1</span>
<span style="left:409.1px">78,6</span>
<span style="left:468.4px">6</span>
<span style="left:523.8px">1</span>
<span style="left:575.2px">33,3</span>
<span style="left:634.5px">2</span>
<span style="left:685.9px">66,7</span>
<span style="left:745.2px">6</span>
<span style="left:800.6px">1</span>
<span style="left:855.9px">624</span>
<span style="left:907.4px">1872</span>
<span style="left:966.6px">16</span>
<span style="left:1022.0px">0</span>
<span style="left:1077.4px">16</span>
<span style="left:1128.8px">99,1</span>
</div>
<div class="row" style="top:481.15px;height:16.15px;line-height:16.15px">
<span style="left:13.2px">Б 33</span>
<span style="left:150.8px">3</span>
<span style="left:206.2px">39</span>
<span style="left:261.5px">20</span>
<span style="left:298.4px">13</span>
<span style="left:335.3px">5</span>
<span style="left:372.2px">1</span>
<span style="left:409.1px">84,6</span>
<span style="left:468.4px">2</span>
<span style="left:523.8px">1</span>
<span style="left:575.2px">33,3</span>
<span style="left:634.5px">2</span>
<span style="left:685.9px">66,7</span>
<span style="left:745.2px">6</span>
<span style="left:800.6px">1</span>
<span style="left:855.9px">640</span>
<span style="left:907.4px">1920</span>
<span style="left:966.6px">18</span>
<span style="left:1022.0px">0</span>
<span style="left:1077.4px">18</span>
<span style="left:1128.8px">99,1</span>
</div>
<div class="row" style="top:497.30px;height:16.15px;line-height:16.15px">
<span style="left:13.2px">Б 34</span>
<span style="left:150.8px">3</span>
<span style="left:206.2px">39</span>
<span style="left:261.5px">19</span>
<span style="left:298.4px">13</span>
<span style="left:335.3px">7</span>
<span style="left:372.2px">0</span>
<span style="left:409.1px">82,1</span>
<span style="left:468.4px">4</span>
<span style="left:523.8px">1</span>
<span style="left:575.2px">33,3</span>
<span style="left:634.5px">2</span>
<span style="left:685.9px">100</span>
<span style="left:745.2px">1</span>
<span style="left:800.6px">0</span>
<span style="left:855.9px">640</span>
</div>
<div class="row" style="top:513.45px;height:16.15px;line-height:16.15px">
<span style="left:13.2px">Б 35</span>
<span style="left:150.8px">3</span>
<span style="left:206.2px">39</span>
<span style="left:261.5px">11</span>
<span style="left:298.4px">22</span>
<span style="left:335.3px">6</span>
<span style="left:372.2px">0</span>
<span style="left:409.1px">84,6</span>
<span style="left:468.4px">2</span>
<span style="left:523.8px">0</span>
<span style="left:575.2px">0</span>
<span style="left:634.5px">8</span>
<span style="left:685.9px">100</span>
<span style="left:745.2px">1</span>
<span style="left:800.6px">0</span>
<span style="left:855.9px">636</span>
</div>
<div class="row" style="top:529.60px;height:16.15px;line-height:16.15px">
<span style="left:13.2px">Б 41</span>
<span style="left:150.8px">3</span>
<span style="left:206.2px">36</span>
<span style="left:261.5px">21</span>
<span style="left:298.4px">11</span>
<span style="left:335.3px">4</span>
<span style="left:372.2px">0</span>
<span style="left:409.1px">88,9</span>
<span style="left:468.4px">1</span>
<span style="left:523.8px">2</span>
<span style="left:575.2px">66,7</span>
<span style="left:634.5px">1</span>
<span style="left:685.9px">100</span>
<span style="left:745.2px">1</span>
<span style="left:800.6px">0</span>
<span style="left:855.9px">574</span>
</div>
<div class="selbg" style="top:544.45px;height:15.3px"></div>
<div class="row sel" style="top:545.75px;height:16.15px;line-height:16.15px">
<span style="left:13.2px">Б 12</span>
<span style="left:150.8px">15</span>
<span style="left:206.2px">194</span>
<span style="left:261.5px">40</span>
<span style="left:298.4px">73</span>
<span style="left:335.3px">56</span>
<span style="left:372.2px">25</span>
<span style="left:409.1px">58,2</span>
<span style="left:468.4px">12</span>
<span style="left:523.8px">1</span>
<span style="left:575.2px">6,7</span>
<span style="left:634.5px">7</span>
<span style="left:685.9px">40</span>
<span style="left:745.2px">12</span>
<span style="left:800.6px">9</span>
<span style="left:855.9px">644</span>
</div>
<div class="sb" style="top:607.6px;height:21.8px">
  <div class="sbtn" style="left:1.6px;top:2.7px;height:14.3px;box-shadow:0 0 0 1px #fff,0 1.7px 0 0.2px #A8C2EE"><svg width="15.8" height="14.8" viewBox="0 0 15.8 14.8"><path d="M9.4 3.2 L4.6 7.6 L9.4 12" fill="none" stroke="#435788" stroke-width="2.4" stroke-linejoin="miter"/></svg></div>
  <div class="thumb" style="left:21.7px;top:2.7px;width:964.6px;height:14.3px;box-shadow:0 0 0 1px #fff,0 1.7px 0 0.2px #A8C2EE"></div>
  <div class="grip" style="left:498.6px;top:5.6px"></div>
</div>
<div class="panel" style="left:877.8px;top:489.8px;width:303.2px;height:137.6px">
<svg width="303.2" height="137.6" viewBox="877.8 489.8 303.2 137.6" style="position:absolute;left:0;top:0;font-family:'Liberation Sans',sans-serif;font-size:12.4px">
<rect x="920" y="587.5" width="222.6" height="1.4" fill="#151515"/>
<rect x="920" y="564.0" width="222.6" height="1.4" fill="#151515"/>
<rect x="920" y="540.5" width="222.6" height="1.4" fill="#151515"/>
<rect x="920" y="517.0" width="222.6" height="1.4" fill="#151515"/>
<rect x="924.7" y="517.0" width="1.4" height="90.8" fill="#151515"/>
<rect x="942.4" y="517.0" width="1.4" height="90.8" fill="#151515"/>
<rect x="960.1" y="517.0" width="1.4" height="90.8" fill="#151515"/>
<rect x="977.7" y="517.0" width="1.4" height="90.8" fill="#151515"/>
<rect x="995.4" y="517.0" width="1.4" height="90.8" fill="#151515"/>
<rect x="1013.1" y="517.0" width="1.4" height="90.8" fill="#151515"/>
<rect x="1030.8" y="517.0" width="1.4" height="90.8" fill="#151515"/>
<rect x="1048.5" y="517.0" width="1.4" height="90.8" fill="#151515"/>
<rect x="1066.1" y="517.0" width="1.4" height="90.8" fill="#151515"/>
<rect x="1083.8" y="517.0" width="1.4" height="90.8" fill="#151515"/>
<rect x="1101.5" y="517.0" width="1.4" height="90.8" fill="#151515"/>
<rect x="1119.2" y="517.0" width="1.4" height="90.8" fill="#151515"/>
<rect x="1136.9" y="517.0" width="1.4" height="90.8" fill="#151515"/>
<rect x="925.4" y="531.8" width="17.68" height="56.4" fill="#FF0000"/>
<rect x="943.1" y="550.6" width="17.68" height="37.6" fill="#00FF00"/>
<rect x="960.8" y="564.7" width="17.68" height="23.5" fill="#0000FF"/>
<rect x="978.4" y="545.9" width="17.68" height="42.3" fill="#FFFF00"/>
<rect x="996.1" y="541.2" width="17.68" height="47.0" fill="#FF00FF"/>
<rect x="1013.8" y="555.3" width="17.68" height="32.9" fill="#00FFFF"/>
<rect x="1031.5" y="560.0" width="17.68" height="28.2" fill="#404040"/>
<rect x="1049.2" y="578.8" width="17.68" height="9.4" fill="#800000"/>
<rect x="1066.8" y="569.4" width="17.68" height="18.8" fill="#008000"/>
<rect x="1084.5" y="574.1" width="17.68" height="14.1" fill="#000080"/>
<rect x="1102.2" y="583.5" width="17.68" height="4.7" fill="#808000"/>
<rect x="1119.9" y="536.5" width="17.68" height="51.7" fill="#800080"/>
<rect x="920" y="587.5" width="9" height="1.4" fill="#151515"/>
<rect x="1134" y="587.5" width="8.6" height="1.4" fill="#151515"/>
<rect x="920" y="564.0" width="9" height="1.4" fill="#151515"/>
<rect x="1134" y="564.0" width="8.6" height="1.4" fill="#151515"/>
<rect x="920" y="540.5" width="9" height="1.4" fill="#151515"/>
<rect x="1134" y="540.5" width="8.6" height="1.4" fill="#151515"/>
<rect x="920" y="517.0" width="9" height="1.4" fill="#151515"/>
<rect x="1134" y="517.0" width="8.6" height="1.4" fill="#151515"/>
<text stroke="#000" stroke-width="0.3" x="911.6" y="592.4" text-anchor="end">0</text>
<text stroke="#000" stroke-width="0.3" x="1149.0" y="592.4">0</text>
<text stroke="#000" stroke-width="0.3" x="911.6" y="568.9" text-anchor="end">5</text>
<text stroke="#000" stroke-width="0.3" x="1149.0" y="568.9">5</text>
<text stroke="#000" stroke-width="0.3" x="911.6" y="545.4" text-anchor="end">10</text>
<text stroke="#000" stroke-width="0.3" x="1149.0" y="545.4">10</text>
<text stroke="#000" stroke-width="0.3" x="911.6" y="521.3" text-anchor="end">15</text>
<text stroke="#000" stroke-width="0.3" x="1149.0" y="521.3">15</text>
<text stroke="#000" stroke-width="0.3" transform="translate(936.3 618.8) rotate(-90)" font-size="12.4">Б 11</text>
<text stroke="#000" stroke-width="0.3" transform="translate(971.7 618.8) rotate(-90)" font-size="12.4">Б 22</text>
<text stroke="#000" stroke-width="0.3" transform="translate(1007.0 618.8) rotate(-90)" font-size="12.4">Б 24</text>
<text stroke="#000" stroke-width="0.3" transform="translate(1042.4 618.8) rotate(-90)" font-size="12.4">Б 32</text>
<text stroke="#000" stroke-width="0.3" transform="translate(1077.7 618.8) rotate(-90)" font-size="12.4">Б 34</text>
<text stroke="#000" stroke-width="0.3" transform="translate(1113.1 618.8) rotate(-90)" font-size="12.4">Б 41</text>
</svg></div>

<div class="abs" style="left:1179.6px;top:110px;width:1.4px;height:519px;background:#F3F1E7"></div>
<!-- status bar -->
<div class="abs" style="left:1px;top:627.4px;width:1180px;height:2.2px;background:#F9F8F2"></div>
<div id="status">
  <div class="abs" style="left:0;top:1.5px;width:1180px;height:1.1px;background:#B4B1A1"></div>
  <div class="abs" style="left:0;top:2.6px;width:1180px;height:1px;background:#F7F6F0"></div>
  <div class="abs" style="left:1046.2px;top:3px;width:1px;height:24px;background:#F8F7F1"></div>
  <div class="abs" style="left:1047.4px;top:3px;width:1px;height:24px;background:#D6D3C4"></div>
  <div class="abs" style="left:1050.6px;top:3px;width:108px;height:24px;box-sizing:border-box;border:1px solid #D2CFBF;border-right-color:#F9F8F3;border-bottom:none"></div>
  <span class="abs" style="left:4.4px;top:8.6px;font-size:12px;line-height:14px;letter-spacing:0.37px">Готово</span>
  <span class="abs" style="left:1054.8px;top:8.6px;font-size:12px;line-height:14px;letter-spacing:0.2px">16.08.2009</span>
</div>
<div class="abs" style="left:1px;top:657.5px;width:105px;height:2px;background:#7FB07F"></div>
<div class="abs" style="left:106px;top:657.2px;width:1075px;height:2px;background:#6C9AEC"></div>

<div id="dotT"></div><div id="dotL"></div>
</div>
</body>
</html>
